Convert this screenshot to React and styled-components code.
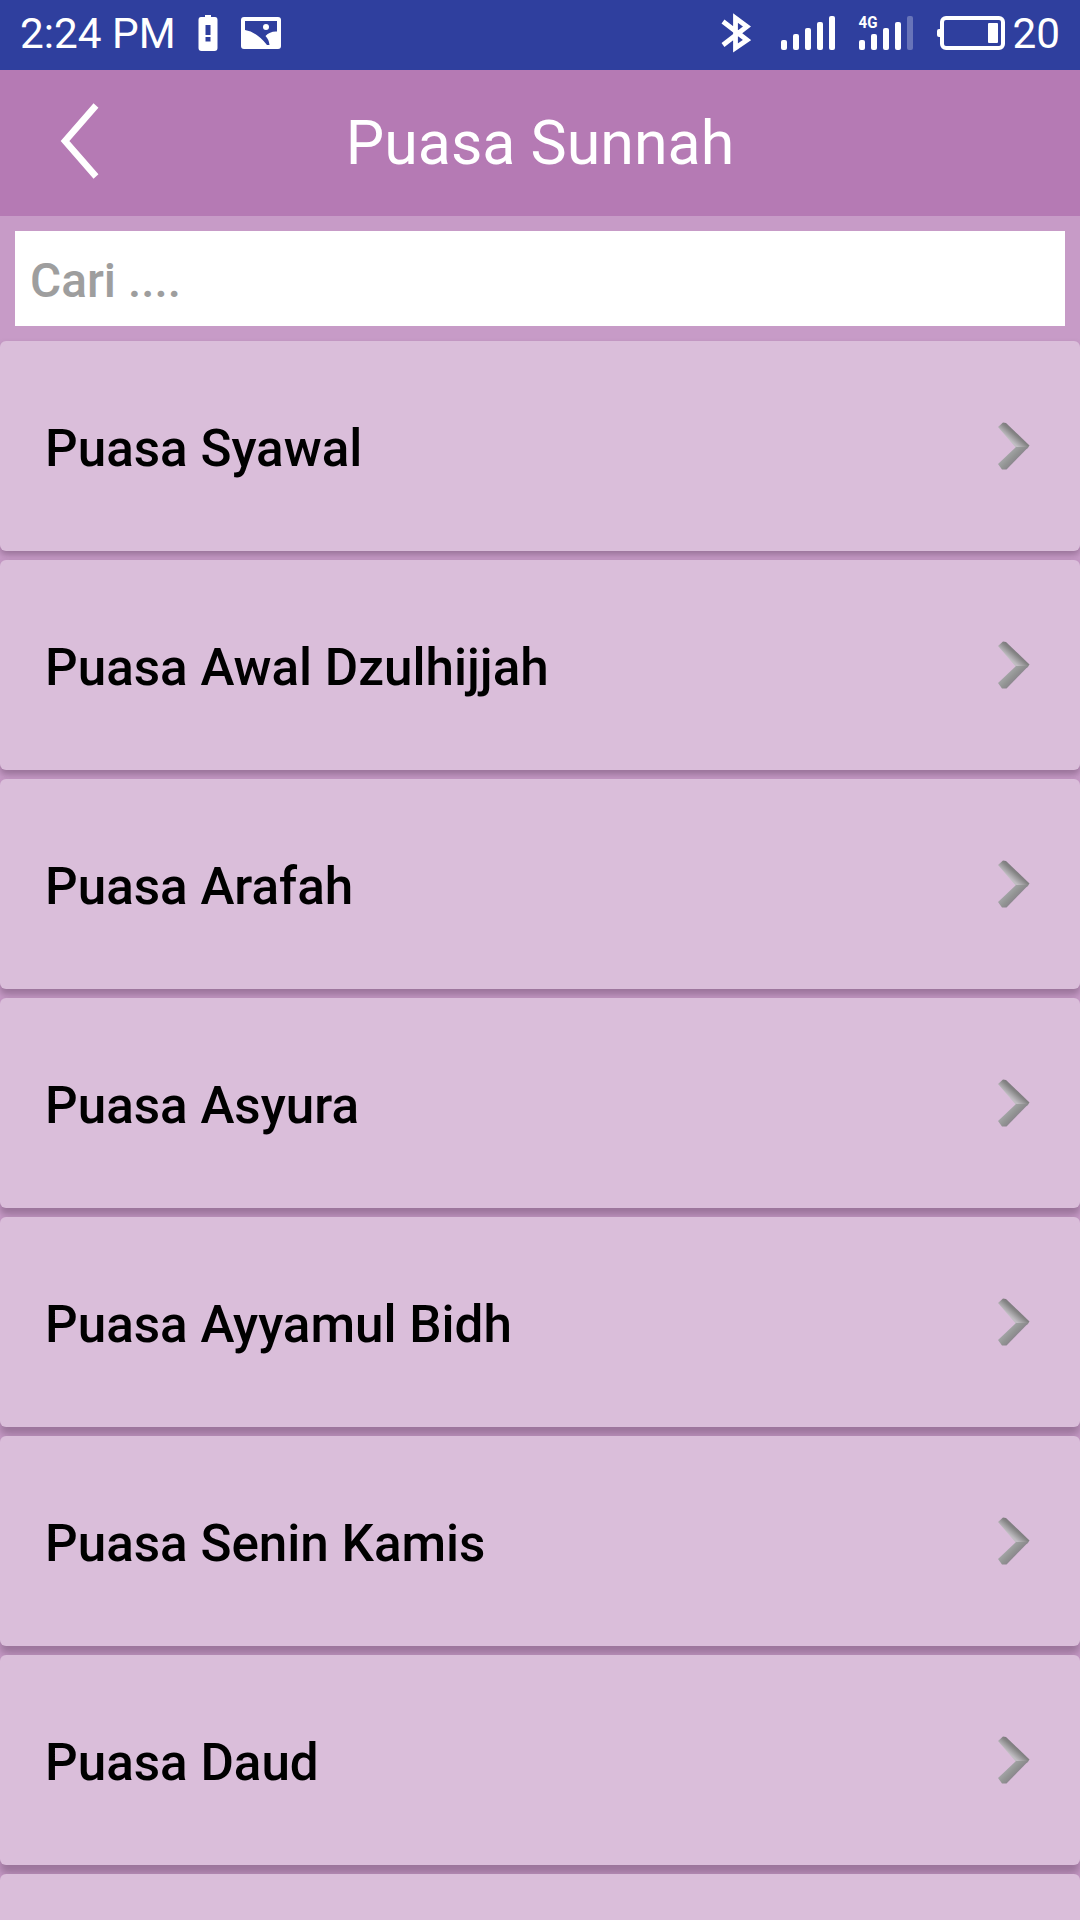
import React from "react";
import styled, { createGlobalStyle } from "styled-components";

const GlobalStyle = createGlobalStyle`
  * { box-sizing: border-box; }
  body { margin: 0; background: #c79bc7; }
  button, input { font: inherit; border: 0; }
`;

const Screen = styled.div`
  display: flex;
  flex-direction: column;
  width: 1080px;
  height: 1920px;
  overflow: hidden;
  background: #c79bc7;
  font-family: Roboto, "Noto Sans", sans-serif;
`;

const StatusBar = styled.header`
  display: flex;
  flex: none;
  align-items: center;
  justify-content: space-between;
  height: 70px;
  padding: 0 20px 4px 20px;
  background: #2f3f9e;
  color: #fff;
  font-size: 42.300px;
  line-height: 66px;
`;

const StatusGroup = styled.div`
  display: flex;
  align-items: center;
  height: 66px;
`;

const StatusText = styled.span`
  display: block;
  padding-top: 2px;
  margin-left: ${(p) => p.$gap || 0}px;
`;

const Icon = styled.svg`
  display: block;
  flex: none;
  margin-left: ${(p) => p.$gap || 0}px;
`;

const TitleBar = styled.div`
  display: grid;
  grid-template-columns: 160px 1fr 160px;
  flex: none;
  align-items: center;
  height: 146px;
  background: #b57ab4;
`;

const BackButton = styled.button`
  display: flex;
  align-items: center;
  height: 146px;
  padding: 0 0 5px 60px;
  background: none;
`;

const Title = styled.h1`
  margin: 0;
  padding-top: 2px;
  color: #fff;
  font-size: 60.900px;
  font-weight: 400;
  line-height: 144px;
  text-align: center;
  white-space: nowrap;
`;

const SearchArea = styled.div`
  flex: none;
  padding: 15px;
`;

const SearchInput = styled.input`
  display: block;
  width: 100%;
  height: 95px;
  padding: 4px 15px 0;
  border-radius: 0;
  outline: 0;
  background: #fff;
  color: #000;
  font-size: 47.800px;
  font-weight: 500;
  &::placeholder { color: #9e9e9e; opacity: 1; }
`;

const List = styled.ul`
  display: flex;
  flex-direction: column;
  gap: 9px;
  margin: 0;
  padding: 0;
  list-style: none;
`;

/* The shadow deepens the further a card is from the top of the screen. */
const Row = styled.li`
  display: flex;
  flex: none;
  align-items: center;
  justify-content: space-between;
  height: 210px;
  padding: 0 49px 0 45px;
  border-radius: 6px;
  background: #dabeda;
  box-shadow: 0 ${(p) => 4 + p.$depth * 0.8}px ${(p) => 6 + p.$depth * 0.5}px rgba(70, 45, 70, 0.34);
`;

const Label = styled.span`
  padding-top: 6px;
  color: #000;
  font-size: 51.200px;
  font-weight: 500;
  line-height: 60px;
  white-space: nowrap;
`;

const BatteryAlert = () => (
  <Icon $gap={22} width="20" height="38" viewBox="0 0 20 38">
    <path
      fill="#fff"
      fillRule="evenodd"
      d="M7 1h6v2h4q2.500 0 2.500 3v28q0 3-3 3h-13q-3 0-3-3V6q0-3 2.500-3h4zM7.500 11v10h5V11zM7.500 23v4.500h5V23z"
    />
  </Icon>
);

const Picture = () => (
  <Icon $gap={22} width="42" height="34" viewBox="0 0 42 34">
    <rect x="1" y="1" width="40" height="32" rx="3" fill="#fff" />
    <path fill="#2f3f9e" d="M5 5h32v10.500q-7-.5-11.500 4.500 3.500 3.500 4 9h-2.500Q17 16 5 14z" />
    <circle cx="26" cy="11" r="3" fill="#fff" />
  </Icon>
);

const Bluetooth = () => (
  <Icon width="30" height="40" viewBox="0 0 30 40">
    <path fill="none" stroke="#fff" strokeWidth="4.800" d="M2 8.500 26 27 14.500 35V5L26 13.500 2 32" />
  </Icon>
);

const bars = [
  [1, 26, 10],
  [13, 20, 16],
  [25, 14, 22],
  [37, 8, 28],
  [49, 2, 34],
];

const Signal = ({ gap, network, level }) => (
  <Icon $gap={gap} width="56" height="38" viewBox="0 0 56 38">
    {bars.map(([x, y, h], i) => (
      <rect key={x} x={x} y={y} width="6" height={h} rx="2" fill="#fff" opacity={i < level ? 1 : 0.28} />
    ))}
    {network && (
      <text x="0.500" y="13.500" fill="#fff" fontSize="16.500" fontWeight="700" textLength="19" lengthAdjust="spacingAndGlyphs">
        {network}
      </text>
    )}
  </Icon>
);

const Battery = () => (
  <Icon $gap={22} width="71" height="36" viewBox="0 0 71 36">
    <rect x="6" y="3" width="61" height="30" rx="4" fill="none" stroke="#fff" strokeWidth="4" />
    <path fill="#fff" d="M5 14v8H3q-2 0-2-2v-4q0-2 2-2z" />
    <rect x="52" y="8" width="10" height="20" rx="1" fill="#fff" />
  </Icon>
);

const BackArrow = () => (
  <Icon width="40" height="76" viewBox="0 0 40 76">
    <path fill="none" stroke="#fff" strokeWidth="6.500" d="M36 2.500 5 38 36 73.500" />
  </Icon>
);

const Chevron = () => (
  <Icon width="34" height="52" viewBox="0 0 34 52">
    <defs>
      <linearGradient id="upper" gradientUnits="userSpaceOnUse" x1="20" y1="10" x2="12" y2="19">
        <stop offset="0" stopColor="#777079" />
        <stop offset="0.400" stopColor="#858585" />
        <stop offset="1" stopColor="#c0bdc2" />
      </linearGradient>
      <linearGradient id="lower" gradientUnits="userSpaceOnUse" x1="13" y1="32" x2="21" y2="40">
        <stop offset="0" stopColor="#a3a4a6" />
        <stop offset="0.500" stopColor="#929493" />
        <stop offset="1" stopColor="#88828b" />
      </linearGradient>
    </defs>
    <path fill="url(#upper)" d="M1 7 6 2.500l3 .5L32.500 25.500 30 29H20z" />
    <path fill="url(#lower)" d="M19 27h12.500L9.500 49.500H5L1 44z" />
  </Icon>
);

const items = [
  "Puasa Syawal",
  "Puasa Awal Dzulhijjah",
  "Puasa Arafah",
  "Puasa Asyura",
  "Puasa Ayyamul Bidh",
  "Puasa Senin Kamis",
  "Puasa Daud",
];

export default function App() {
  return (
    <Screen>
      <GlobalStyle />
      <StatusBar>
        <StatusGroup>
          <StatusText>2:24 PM</StatusText>
          <BatteryAlert />
          <Picture />
        </StatusGroup>
        <StatusGroup>
          <Bluetooth />
          <Signal gap={29} level={5} />
          <Signal gap={22} level={4} network="4G" />
          <Battery />
          <StatusText $gap={5}>20</StatusText>
        </StatusGroup>
      </StatusBar>
      <TitleBar>
        <BackButton aria-label="Kembali">
          <BackArrow />
        </BackButton>
        <Title>Puasa Sunnah</Title>
      </TitleBar>
      <SearchArea>
        <SearchInput placeholder="Cari ...." />
      </SearchArea>
      <List>
        {items.map((item, i) => (
          <Row key={item} $depth={i}>
            <Label>{item}</Label>
            <Chevron />
          </Row>
        ))}
        <Row $depth={items.length} />
      </List>
    </Screen>
  );
}
